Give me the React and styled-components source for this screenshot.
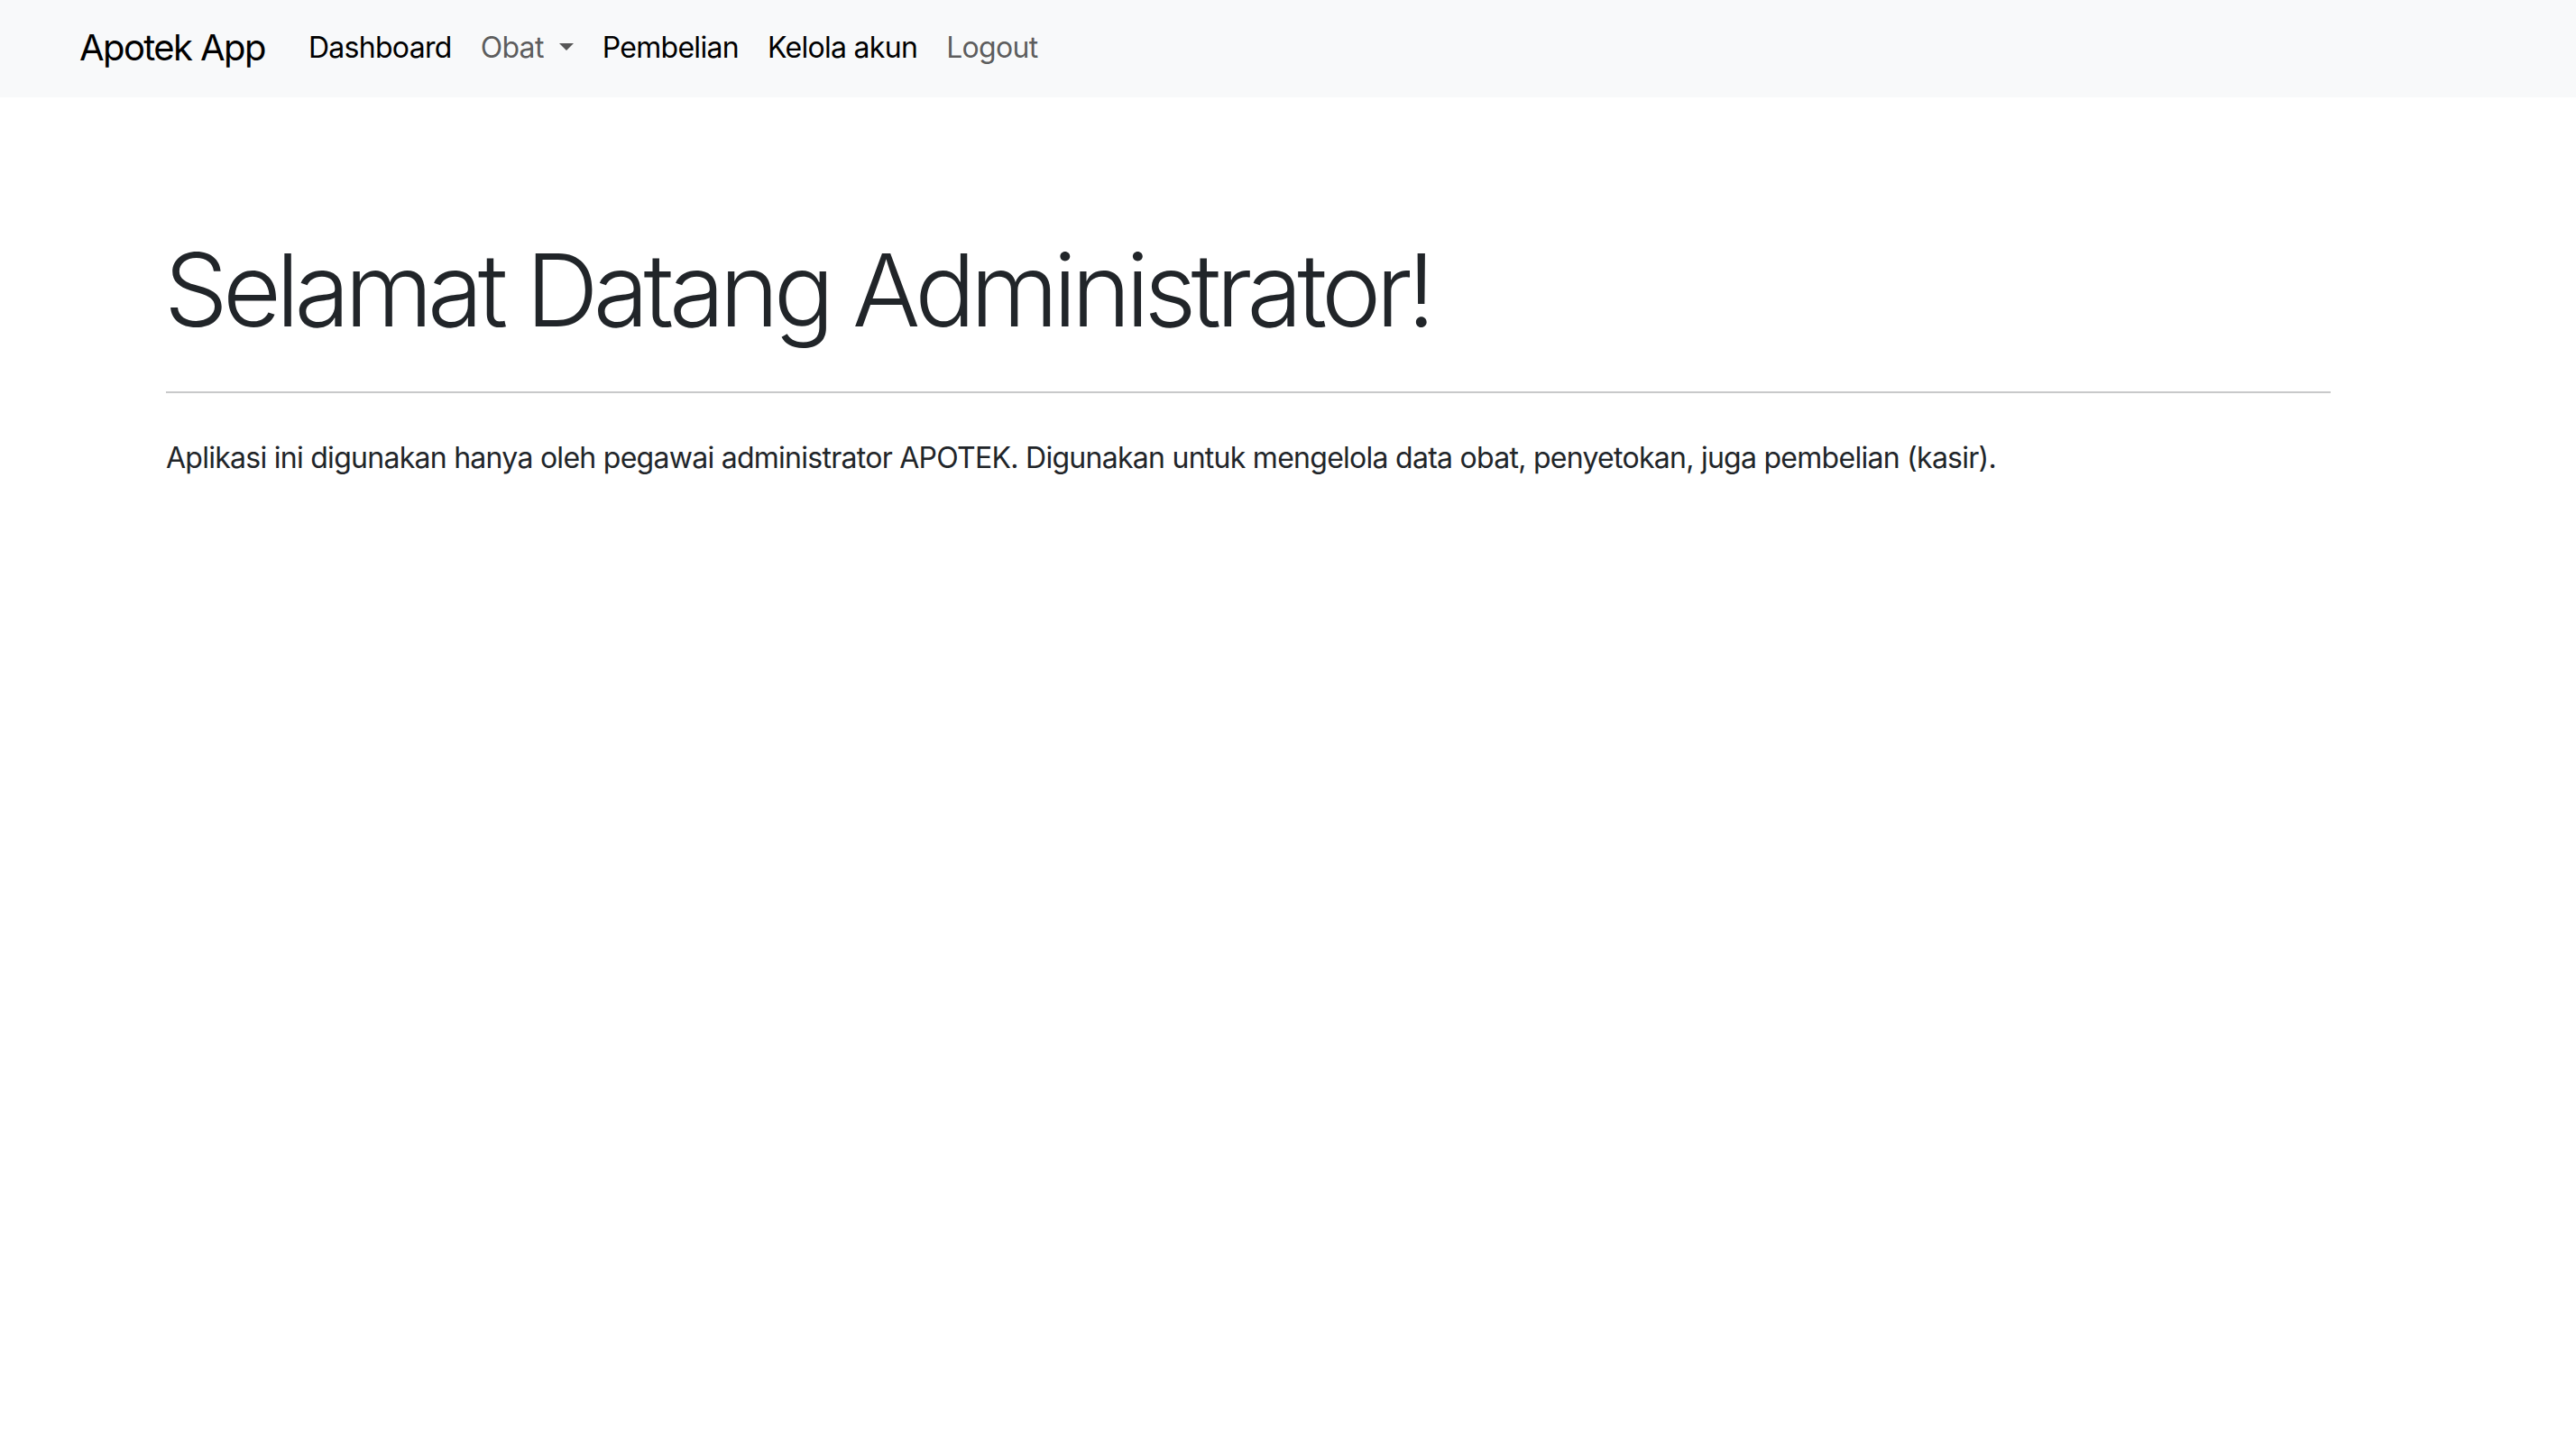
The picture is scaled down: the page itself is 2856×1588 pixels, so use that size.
import React from 'react'
import styled, { createGlobalStyle } from 'styled-components'

const GlobalStyle = createGlobalStyle`
  html, body {
    margin: 0;
    padding: 0;
    background: #fff;
  }
  body {
    font-family: Inter, "Noto Sans", "Liberation Sans", sans-serif;
    color: #212529;
  }
`

const Navbar = styled.nav`
  height: 108px;
  box-sizing: border-box;
  background-color: #f8f9fa;
  display: flex;
  align-items: center;
  padding: 0 0 3px 88px;
`

const Brand = styled.a`
  font-size: 40px;
  line-height: 60px;
  letter-spacing: -1.6px;
  color: #000;
  text-decoration: none;
  margin-right: 32px;
  cursor: pointer;
`

const NavList = styled.ul`
  display: flex;
  align-items: center;
  list-style: none;
  margin: 0;
  padding: 0;
`

const NavLink = styled.a`
  display: flex;
  align-items: center;
  font-size: 32px;
  line-height: 48px;
  letter-spacing: -0.7px;
  padding: 0 16px;
  text-decoration: none;
  cursor: pointer;
  color: ${props => (props.muted ? 'rgba(0, 0, 0, 0.65)' : '#000')};
`

// little triangle after "Obat" (dropdown)
const Caret = styled.span`
  display: inline-block;
  margin-left: 17px;
  margin-bottom: 2px;
  width: 0;
  height: 0;
  border-top: 8px solid currentColor;
  border-left: 8px solid transparent;
  border-right: 8px solid transparent;
`

const Main = styled.main`
  padding: 146px 0 0 184px;
  width: 2400px;
`

const Title = styled.h1`
  margin: 0 0 0 -2px;
  font-size: 112px;
  line-height: 1.2;
  font-weight: 300;
  letter-spacing: -5.8px;
  color: #212529;
`

const Divider = styled.hr`
  margin: 46px 0 48px;
  border: 0;
  border-top: 2px solid #c8c9ca;
`

const Lead = styled.p`
  margin: 0;
  font-size: 32px;
  line-height: 48px;
  letter-spacing: -0.73px;
  color: #212529;
`

export default function App() {
  return (
    <>
      <GlobalStyle />
      <Navbar>
        <Brand>Apotek App</Brand>
        <NavList>
          <li><NavLink>Dashboard</NavLink></li>
          <li><NavLink muted>Obat<Caret /></NavLink></li>
          <li><NavLink>Pembelian</NavLink></li>
          <li><NavLink>Kelola akun</NavLink></li>
          <li><NavLink muted>Logout</NavLink></li>
        </NavList>
      </Navbar>
      <Main>
        <Title>Selamat Datang Administrator!</Title>
        <Divider />
        <Lead>
          Aplikasi ini digunakan hanya oleh pegawai administrator APOTEK. Digunakan untuk mengelola data obat, penyetokan, juga pembelian (kasir).
        </Lead>
      </Main>
    </>
  )
}
